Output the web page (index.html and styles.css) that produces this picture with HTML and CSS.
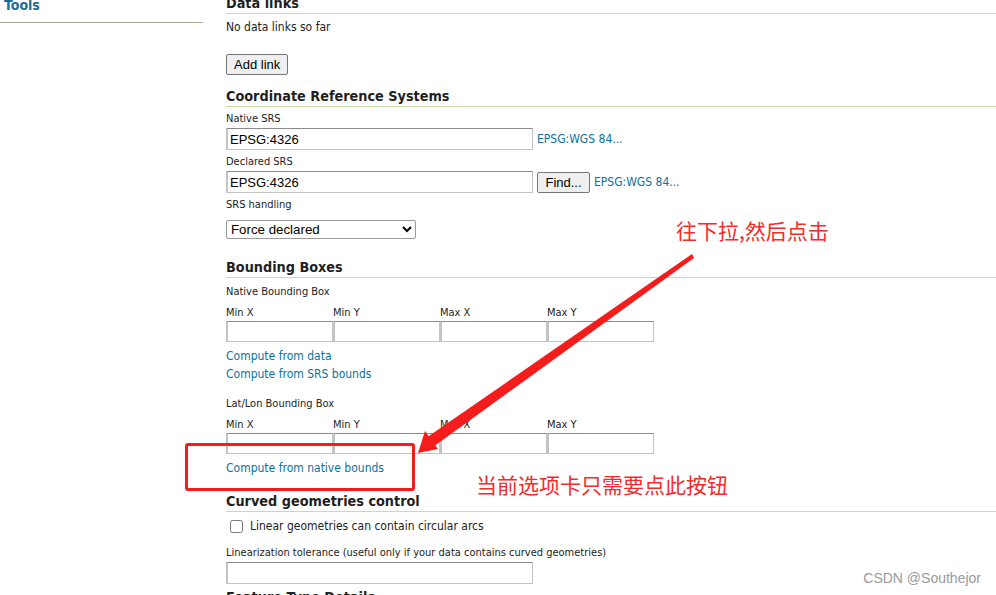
FILE: index.html
```html
<!DOCTYPE html>
<html lang="en">
<head>
    <meta charset="UTF-8">
    <title>Edit Layer</title>
    <link rel="stylesheet" href="styles.css">
</head>
<body>
    <div class="page">
        <div class="sidebar">
            <h4 class="side-title"><a href="#">Tools</a></h4>
        </div>

        <div class="content">
            <h3 class="section first">Data links</h3>
            <p class="note">No data links so far</p>
            <button class="btn add-link">Add link</button>

            <h3 class="section crs">Coordinate Reference Systems</h3>
            <label class="field-label">Native SRS</label>
            <div class="row">
                <input class="text wide" type="text" value="EPSG:4326">
                <a class="srs-link" href="#">EPSG:WGS 84...</a>
            </div>
            <label class="field-label">Declared SRS</label>
            <div class="row">
                <input class="text wide" type="text" value="EPSG:4326">
                <button class="btn find">Find...</button>
                <a class="srs-link" href="#">EPSG:WGS 84...</a>
            </div>
            <label class="field-label">SRS handling</label>
            <select class="handling">
                <option>Force declared</option>
            </select>

            <h3 class="section bbox-title">Bounding Boxes</h3>
            <label class="field-label sub">Native Bounding Box</label>
            <div class="bbox">
                <div class="bbox-col"><span>Min X</span><input class="text" type="text"></div>
                <div class="bbox-col"><span>Min Y</span><input class="text" type="text"></div>
                <div class="bbox-col"><span>Max X</span><input class="text" type="text"></div>
                <div class="bbox-col"><span>Max Y</span><input class="text" type="text"></div>
            </div>
            <div class="links">
                <a href="#">Compute from data</a>
                <a href="#">Compute from SRS bounds</a>
            </div>

            <label class="field-label sub latlon">Lat/Lon Bounding Box</label>
            <div class="bbox">
                <div class="bbox-col"><span>Min X</span><input class="text" type="text"></div>
                <div class="bbox-col"><span>Min Y</span><input class="text" type="text"></div>
                <div class="bbox-col"><span>Max X</span><input class="text" type="text"></div>
                <div class="bbox-col"><span>Max Y</span><input class="text" type="text"></div>
            </div>
            <div class="links">
                <a href="#">Compute from native bounds</a>
            </div>

            <h3 class="section curved">Curved geometries control</h3>
            <label class="check-row">
                <input type="checkbox">
                <span>Linear geometries can contain circular arcs</span>
            </label>
            <label class="field-label tolerance">Linearization tolerance (useful only if your data contains curved geometries)</label>
            <input class="text wide" type="text">

            <h3 class="section details">Feature Type Details</h3>
        </div>
    </div>

    <!-- annotations drawn over the screenshot -->
    <div class="note-box"></div>
    <svg class="arrow" width="996" height="595" viewBox="0 0 996 595">
        <polygon points="692,254 694,258 433,447 426,438" fill="#f51c1c"/>
        <polygon points="418,453 425,431 438,449" fill="#f51c1c"/>
    </svg>
    <div class="tip tip-top">往下拉,然后点击</div>
    <div class="tip tip-bottom">当前选项卡只需要点此按钮</div>
    <div class="watermark">CSDN @Southejor</div>
</body>
</html>
```

FILE: styles.css
```css
body, html {
    margin: 0;
    padding: 0;
    background: #fff;
    overflow: hidden;
}

body {
    font-family: "DejaVu Sans Condensed", "DejaVu Sans", sans-serif;
    font-stretch: condensed;
    color: #222;
    width: 996px;
    height: 595px;
    position: relative;
}

.page {
    display: flex;
    margin-top: -6px;
}

.sidebar {
    width: 203px;
    flex: none;
}

.side-title {
    margin: 0;
    padding: 0 0 6px 4px;
    font-size: 14px;
    line-height: 22px;
    border-bottom: 1px solid #a7ad95;
}

.side-title a {
    color: #1b6d97;
    text-decoration: none;
}

.content {
    flex: 1;
    margin-left: 23px;
}

.section {
    margin: 0;
    font-size: 14.3px;
    line-height: 17px;
    padding-top: 1px;
    padding-bottom: 1px;
    border-bottom: 1px solid #c8dda5;
    color: #1f1f1f;
}

.note {
    margin: 6px 0 0;
    font-size: 12px;
    line-height: 14px;
}

.btn {
    font-family: "Liberation Sans", Arial, sans-serif;
    font-size: 13px;
    height: 21px;
    padding: 0 7px;
    border: 1px solid #767676;
    border-radius: 2px;
    background: #efefef;
    color: #000;
}

.add-link {
    display: block;
    margin-top: 20px;
}

.crs { margin-top: 12px; }

.field-label {
    display: block;
    font-size: 11px;
    line-height: 13px;
    padding-top: 1px;
    margin-top: 4px;
    color: #222;
}

.row {
    display: flex;
    align-items: center;
    gap: 4px;
    margin-top: 3px;
}

.text {
    box-sizing: border-box;
    height: 22px;
    padding: 1px 2px;
    font-family: "Liberation Sans", Arial, sans-serif;
    font-size: 13px;
    color: #000;
    border: 1px solid #c4c4c4;
    border-top-color: #8a8a8a;
    border-left-width: 2px;
    margin: 0;
}

.wide { width: 307px; }

.srs-link {
    font-size: 12px;
    color: #0b72a0;
    text-decoration: none;
}

.find {
    height: 21px;
    width: 53px;
    padding: 0;
}

.handling {
    display: block;
    margin-top: 9px;
    width: 190px;
    height: 19px;
    font-family: "Liberation Sans", Arial, sans-serif;
    font-size: 13.3px;
    border: 1px solid #9a9a9a;
    border-radius: 2px;
    background: #fff;
    color: #000;
}

.bbox-title { margin-top: 19px; }

.sub { margin-top: 6px; }

.bbox {
    display: flex;
    margin-top: 7px;
}

.bbox-col {
    display: flex;
    flex-direction: column;
    width: 107px;
}

.bbox-col span {
    font-size: 11px;
    line-height: 13px;
    padding-top: 1px;
    color: #222;
}

.bbox-col .text {
    width: 107px;
    height: 21px;
    margin-top: 2px;
}

.links {
    display: flex;
    flex-direction: column;
    margin-top: 4px;
    padding-top: 1px;
}

.links a {
    font-size: 12px;
    line-height: 18px;
    color: #0b72a0;
    text-decoration: none;
}

.latlon { margin-top: 13px; }

.curved { margin-top: 15px; }

.check-row {
    display: flex;
    align-items: center;
    gap: 7px;
    margin-top: 6px;
    padding-left: 4px;
    font-size: 12px;
    line-height: 14px;
}

.check-row input {
    margin: 1px 0 0;
    width: 13px;
    height: 13px;
}

.check-row span { padding-top: 1px; }

.tolerance { margin-top: 12px; padding-top: 2px; line-height: 12px; }

.tolerance + .text { margin-top: 3px; display: block; }

.details { margin-top: 4px; }

.note-box {
    position: absolute;
    left: 185px;
    top: 443px;
    width: 224px;
    height: 42px;
    border: 3px solid #f51c1c;
    border-radius: 3px;
}

.arrow {
    position: absolute;
    left: 0;
    top: 0;
}

.tip {
    position: absolute;
    font-family: "Noto Sans CJK SC", sans-serif;
    font-size: 21px;
    line-height: 24px;
    color: #f52a2a;
}

.tip-top {
    left: 676px;
    top: 218px;
}

.tip-bottom {
    left: 476px;
    top: 472px;
}

.watermark {
    position: absolute;
    right: 15px;
    bottom: 9px;
    font-family: "Liberation Sans", Arial, sans-serif;
    font-size: 14px;
    color: #9a9a9a;
}
```
